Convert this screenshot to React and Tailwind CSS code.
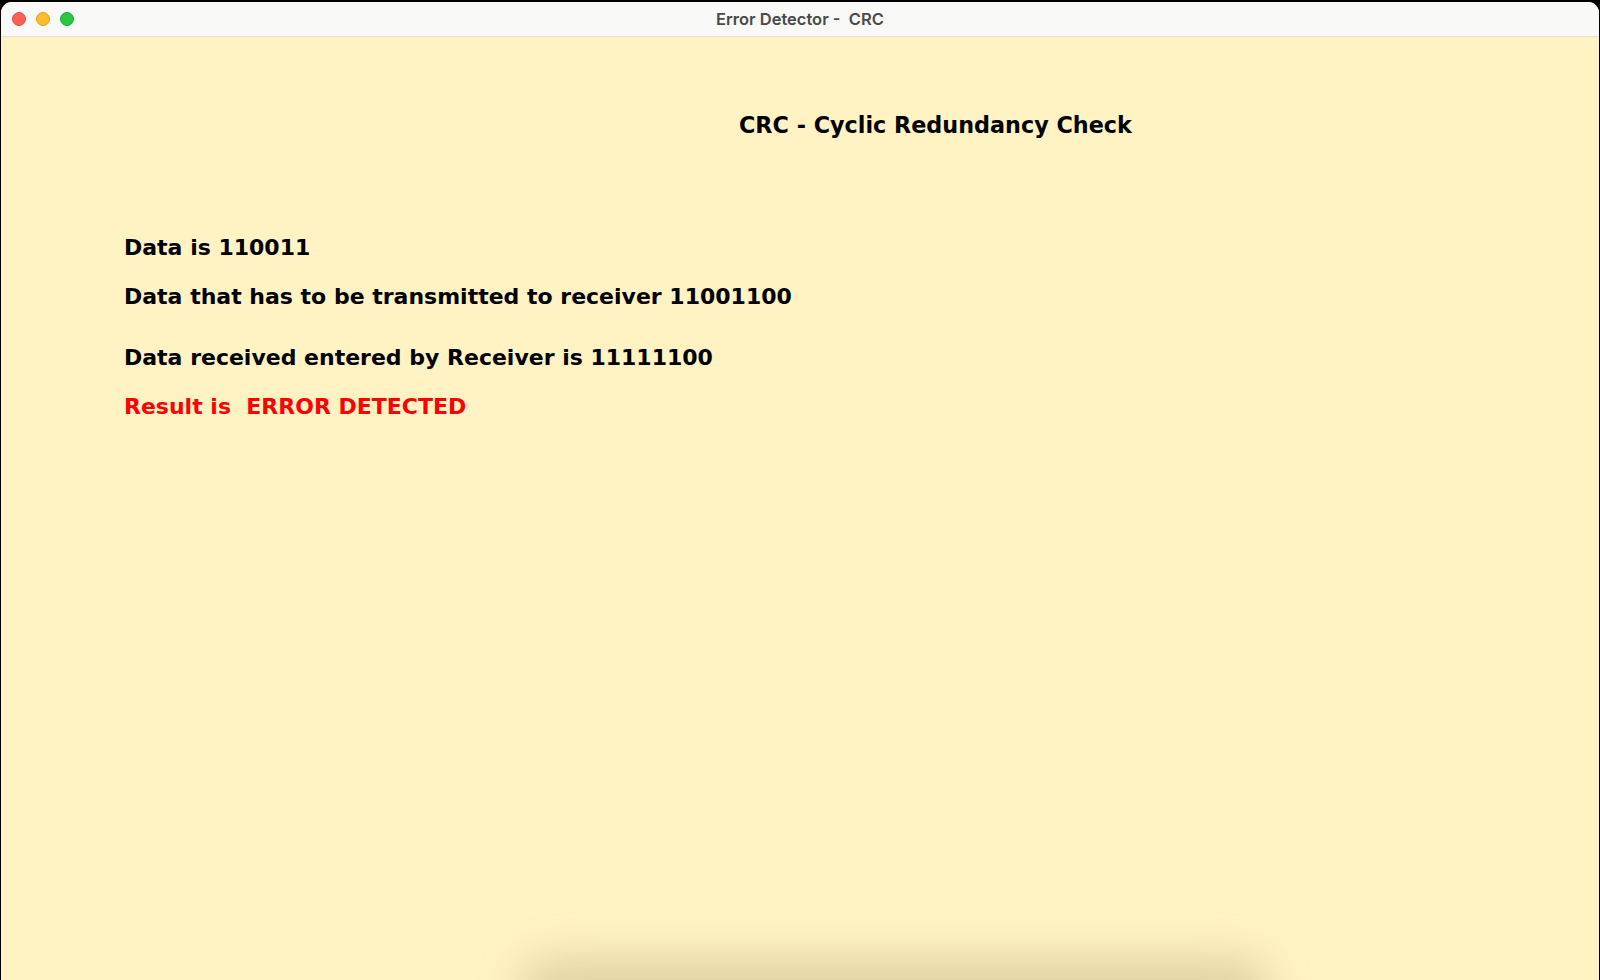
export default function App() {
  const font = { fontFamily: '"DejaVu Sans", Verdana, sans-serif' };
  return (
    <div className="w-[1600px] h-[980px] bg-black pt-[2px] px-[1px] overflow-hidden">
      <div className="relative w-full h-[978px] rounded-t-[11px] overflow-hidden bg-[#fff2c3] flex flex-col">
        <div className="relative h-[35px] shrink-0 bg-[#f9f9f8] border-b border-[#e3dfcf] flex items-center">
          <div className="flex items-center gap-[10px] pl-[11px]">
            <span className="w-[14px] h-[14px] rounded-full bg-[#fe5f57] border border-[#e2463f]" />
            <span className="w-[14px] h-[14px] rounded-full bg-[#febc2e] border border-[#e1a116]" />
            <span className="w-[14px] h-[14px] rounded-full bg-[#28c840] border border-[#14ae2b]" />
          </div>
          <div
            className="absolute inset-0 flex items-center justify-center text-[16.5px] font-semibold text-[#4a4a4a]"
            style={{ fontFamily: 'Inter, "Open Sans", sans-serif' }}
          >
            Error Detector -&nbsp; CRC
          </div>
        </div>
        <div className="flex-1 relative" style={font}>
          <div className="mt-[74px] pl-[738px] text-[22.3px] leading-[28px] font-bold text-black">
            CRC - Cyclic Redundancy Check
          </div>
          <div className="mt-[95px] pl-[123px] flex flex-col text-[22px] leading-[28px] font-bold text-black">
            <div>Data is 110011</div>
            <div className="mt-[21px]">Data that has to be transmitted to receiver 11001100</div>
            <div className="mt-[33px]">Data received entered by Receiver is 11111100</div>
            <div className="mt-[21px] text-[#ff0000]">Result is&nbsp; ERROR DETECTED</div>
          </div>
          <div className="absolute left-[520px] right-[330px] bottom-[-40px] h-[60px] rounded-full bg-[#c9b98a] opacity-60 blur-[22px]" />
        </div>
      </div>
    </div>
  );
}
